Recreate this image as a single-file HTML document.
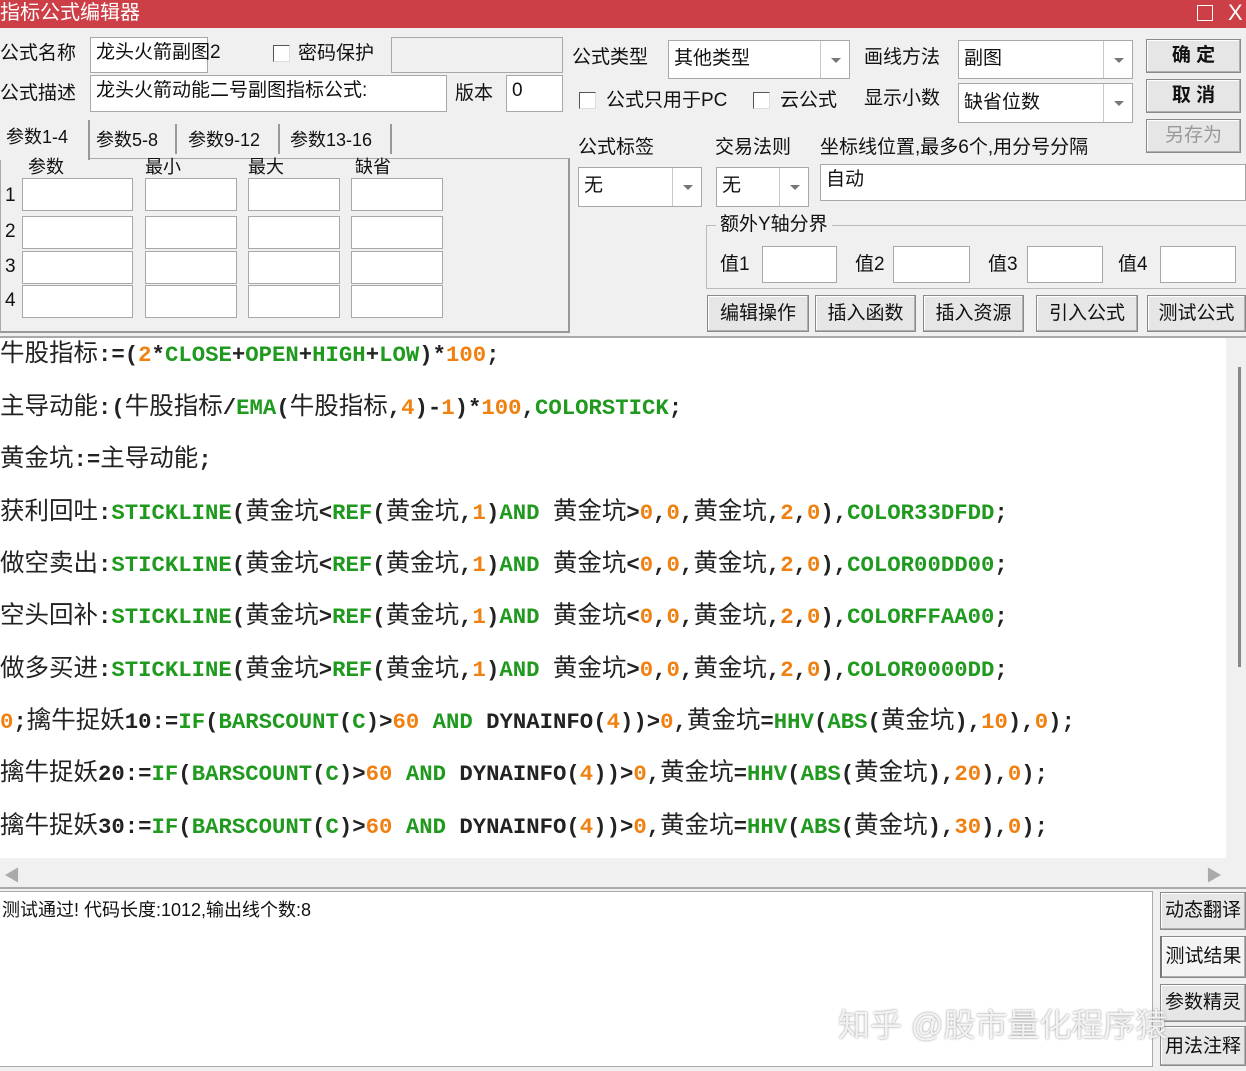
<!DOCTYPE html>
<html><head><meta charset="utf-8"><style>
body{margin:0;width:1246px;height:1071px;background:#f0f0f0;position:relative;overflow:hidden;font-family:"Liberation Sans","Noto Sans CJK SC",sans-serif;color:#111}
.a{position:absolute;white-space:nowrap}
.t{position:absolute;white-space:nowrap;font-size:19px;line-height:22px}
.box{position:absolute;background:#fff;border:1px solid #a8a8a8;box-sizing:border-box;font-size:19px;line-height:22px;padding:4px 5px;white-space:nowrap}
.btn{position:absolute;background:#e6e6e6;border:1px solid #8a8a8a;box-shadow:inset -1px -1px 0 #b0b0b0,inset 1px 1px 0 #fff;box-sizing:border-box;font-size:19px;text-align:center;white-space:nowrap}
.dd{position:absolute;right:0;top:0;bottom:0;width:28px;border-left:1px solid #c8c8c8}
.dd:after{content:"";position:absolute;left:10px;top:50%;margin-top:-2px;border:5px solid transparent;border-top:5px solid #777;border-bottom:0}
.cb{position:absolute;width:15px;height:15px;border:1px solid #555;border-right-color:#ddd;border-bottom-color:#ddd;background:#fff}
.code{position:absolute;left:0;font-family:"Liberation Mono",monospace;font-weight:bold;font-size:22.3px;line-height:32px;white-space:nowrap;color:#222}
.code .c{font-family:"Noto Sans CJK SC",sans-serif;font-weight:normal;font-size:24.5px}
.g{color:#1f9a1f}.o{color:#f08010}
</style></head><body>
<div class="a" style="left:0;top:0;width:1246px;height:28px;background:#cc3f46"></div>
<div class="t" style="left:0;top:2px;color:#fff;font-size:20px">指标公式编辑器</div>
<div class="a" style="left:1197px;top:5px;width:14px;height:14px;border:1.5px solid #fff"></div>
<div class="a" style="left:1228px;top:0;color:#fff;font-size:22px">X</div>

<div class="t" style="left:0;top:43px">公式名称</div>
<div class="box" style="left:90px;top:37px;width:118px;height:36px">龙头火箭副图2</div>
<div class="cb" style="left:273px;top:45px"></div>
<div class="t" style="left:298px;top:43px">密码保护</div>
<div class="box" style="left:391px;top:37px;width:172px;height:36px;background:#f0f0f0"></div>
<div class="t" style="left:0;top:83px">公式描述</div>
<div class="box" style="left:90px;top:75px;width:357px;height:37px">龙头火箭动能二号副图指标公式:</div>
<div class="t" style="left:455px;top:83px">版本</div>
<div class="box" style="left:506px;top:75px;width:57px;height:37px">0</div>

<div class="a" style="left:0;top:158px;width:567px;height:172px;border:1px solid #aaa;border-right:2px solid #999;border-bottom:2px solid #999;background:#f0f0f0"></div>
<div class="a" style="left:0;top:120px;width:88px;height:40px;background:#f0f0f0;border-right:2px solid #999"></div>
<div class="t" style="left:6px;top:126px;font-size:18px">参数1-4</div>
<div class="t" style="left:96px;top:129px;font-size:18px">参数5-8</div>
<div class="a" style="left:175px;top:124px;height:30px;border-left:2px solid #999"></div>
<div class="t" style="left:188px;top:129px;font-size:18px">参数9-12</div>
<div class="a" style="left:278px;top:124px;height:30px;border-left:2px solid #999"></div>
<div class="t" style="left:290px;top:129px;font-size:18px">参数13-16</div>
<div class="a" style="left:390px;top:124px;height:30px;border-left:2px solid #999"></div>
<div class="t" style="left:28px;top:156px;font-size:18px">参数</div>
<div class="t" style="left:145px;top:156px;font-size:18px">最小</div>
<div class="t" style="left:248px;top:156px;font-size:18px">最大</div>
<div class="t" style="left:355px;top:156px;font-size:18px">缺省</div>
<div class="t" style="left:5px;top:185px">1</div><div class="t" style="left:5px;top:221px">2</div><div class="t" style="left:5px;top:256px">3</div><div class="t" style="left:5px;top:290px">4</div>
<div class="box" style="left:22px;top:178px;width:111px;height:33px"></div><div class="box" style="left:145px;top:178px;width:92px;height:33px"></div><div class="box" style="left:248px;top:178px;width:92px;height:33px"></div><div class="box" style="left:351px;top:178px;width:92px;height:33px"></div>
<div class="box" style="left:22px;top:216px;width:111px;height:33px"></div><div class="box" style="left:145px;top:216px;width:92px;height:33px"></div><div class="box" style="left:248px;top:216px;width:92px;height:33px"></div><div class="box" style="left:351px;top:216px;width:92px;height:33px"></div>
<div class="box" style="left:22px;top:251px;width:111px;height:33px"></div><div class="box" style="left:145px;top:251px;width:92px;height:33px"></div><div class="box" style="left:248px;top:251px;width:92px;height:33px"></div><div class="box" style="left:351px;top:251px;width:92px;height:33px"></div>
<div class="box" style="left:22px;top:285px;width:111px;height:33px"></div><div class="box" style="left:145px;top:285px;width:92px;height:33px"></div><div class="box" style="left:248px;top:285px;width:92px;height:33px"></div><div class="box" style="left:351px;top:285px;width:92px;height:33px"></div>

<div class="t" style="left:572px;top:47px">公式类型</div>
<div class="box" style="left:668px;top:40px;width:182px;height:39px;padding-top:7px">其他类型<span class="dd"></span></div>
<div class="t" style="left:864px;top:47px">画线方法</div>
<div class="box" style="left:958px;top:40px;width:175px;height:39px;padding-top:7px">副图<span class="dd"></span></div>
<div class="cb" style="left:579px;top:92px"></div>
<div class="t" style="left:606px;top:90px">公式只用于PC</div>
<div class="cb" style="left:753px;top:92px"></div>
<div class="t" style="left:780px;top:90px">云公式</div>
<div class="t" style="left:864px;top:88px">显示小数</div>
<div class="box" style="left:958px;top:83px;width:175px;height:40px;padding-top:8px">缺省位数<span class="dd"></span></div>
<div class="btn" style="left:1146px;top:39px;width:95px;height:34px;line-height:32px;font-weight:bold">确 定</div>
<div class="btn" style="left:1146px;top:79px;width:95px;height:34px;line-height:32px;font-weight:bold">取 消</div>
<div class="btn" style="left:1146px;top:119px;width:95px;height:34px;line-height:32px;color:#999">另存为</div>
<div class="t" style="left:578px;top:137px">公式标签</div>
<div class="t" style="left:715px;top:137px">交易法则</div>
<div class="t" style="left:820px;top:137px">坐标线位置,最多6个,用分号分隔</div>
<div class="box" style="left:578px;top:167px;width:124px;height:40px;padding-top:7px">无<span class="dd"></span></div>
<div class="box" style="left:716px;top:167px;width:93px;height:40px;padding-top:7px">无<span class="dd"></span></div>
<div class="box" style="left:820px;top:164px;width:426px;height:37px">自动</div>
<div class="a" style="left:706px;top:225px;width:540px;height:62px;border:1px solid #bbb;border-right:0"></div>
<div class="t" style="left:716px;top:214px;background:#f0f0f0;padding:0 4px">额外Y轴分界</div>
<div class="t" style="left:720px;top:254px">值1</div><div class="box" style="left:762px;top:246px;width:75px;height:37px"></div>
<div class="t" style="left:855px;top:254px">值2</div><div class="box" style="left:893px;top:246px;width:77px;height:37px"></div>
<div class="t" style="left:988px;top:254px">值3</div><div class="box" style="left:1027px;top:246px;width:76px;height:37px"></div>
<div class="t" style="left:1118px;top:254px">值4</div><div class="box" style="left:1160px;top:246px;width:76px;height:37px"></div>
<div class="btn" style="left:707px;top:295px;width:102px;height:37px;line-height:35px">编辑操作</div>
<div class="btn" style="left:815px;top:295px;width:101px;height:37px;line-height:35px">插入函数</div>
<div class="btn" style="left:923px;top:295px;width:101px;height:37px;line-height:35px">插入资源</div>
<div class="btn" style="left:1036px;top:295px;width:102px;height:37px;line-height:35px">引入公式</div>
<div class="btn" style="left:1147px;top:295px;width:99px;height:37px;line-height:35px">测试公式</div>

<div class="a" style="left:0;top:336px;width:1246px;height:2px;background:#aaa"></div>
<div class="a" style="left:0;top:338px;width:1226px;height:520px;background:#fff"></div>
<div class="a" style="left:1226px;top:338px;width:20px;height:520px;background:#f0f0f0"></div>
<div class="a" style="left:1238px;top:367px;width:3px;height:300px;background:#888"></div>
<div class="a" style="left:4px;top:862px;color:#aaa;font-size:16px">◀</div>
<div class="a" style="left:1206px;top:862px;color:#aaa;font-size:16px">▶</div>

<div class="code" style="top:336px"><span class="c">牛股指标</span>:=(<span class="o">2</span>*<span class="g">CLOSE</span>+<span class="g">OPEN</span>+<span class="g">HIGH</span>+<span class="g">LOW</span>)*<span class="o">100</span>;</div>
<div class="code" style="top:389px"><span class="c">主导动能</span>:(<span class="c">牛股指标</span>/<span class="g">EMA</span>(<span class="c">牛股指标</span>,<span class="o">4</span>)-<span class="o">1</span>)*<span class="o">100</span>,<span class="g">COLORSTICK</span>;</div>
<div class="code" style="top:441px"><span class="c">黄金坑</span>:=<span class="c">主导动能</span>;</div>
<div class="code" style="top:494px"><span class="c">获利回吐</span>:<span class="g">STICKLINE</span>(<span class="c">黄金坑</span>&lt;<span class="g">REF</span>(<span class="c">黄金坑</span>,<span class="o">1</span>)<span class="g">AND</span> <span class="c">黄金坑</span>&gt;<span class="o">0</span>,<span class="o">0</span>,<span class="c">黄金坑</span>,<span class="o">2</span>,<span class="o">0</span>),<span class="g">COLOR33DFDD</span>;</div>
<div class="code" style="top:546px"><span class="c">做空卖出</span>:<span class="g">STICKLINE</span>(<span class="c">黄金坑</span>&lt;<span class="g">REF</span>(<span class="c">黄金坑</span>,<span class="o">1</span>)<span class="g">AND</span> <span class="c">黄金坑</span>&lt;<span class="o">0</span>,<span class="o">0</span>,<span class="c">黄金坑</span>,<span class="o">2</span>,<span class="o">0</span>),<span class="g">COLOR00DD00</span>;</div>
<div class="code" style="top:598px"><span class="c">空头回补</span>:<span class="g">STICKLINE</span>(<span class="c">黄金坑</span>&gt;<span class="g">REF</span>(<span class="c">黄金坑</span>,<span class="o">1</span>)<span class="g">AND</span> <span class="c">黄金坑</span>&lt;<span class="o">0</span>,<span class="o">0</span>,<span class="c">黄金坑</span>,<span class="o">2</span>,<span class="o">0</span>),<span class="g">COLORFFAA00</span>;</div>
<div class="code" style="top:651px"><span class="c">做多买进</span>:<span class="g">STICKLINE</span>(<span class="c">黄金坑</span>&gt;<span class="g">REF</span>(<span class="c">黄金坑</span>,<span class="o">1</span>)<span class="g">AND</span> <span class="c">黄金坑</span>&gt;<span class="o">0</span>,<span class="o">0</span>,<span class="c">黄金坑</span>,<span class="o">2</span>,<span class="o">0</span>),<span class="g">COLOR0000DD</span>;</div>
<div class="code" style="top:703px"><span class="o">0</span>;<span class="c">擒牛捉妖</span>10:=<span class="g">IF</span>(<span class="g">BARSCOUNT</span>(<span class="g">C</span>)&gt;<span class="o">60</span> <span class="g">AND</span> DYNAINFO(<span class="o">4</span>))&gt;<span class="o">0</span>,<span class="c">黄金坑</span>=<span class="g">HHV</span>(<span class="g">ABS</span>(<span class="c">黄金坑</span>),<span class="o">10</span>),<span class="o">0</span>);</div>
<div class="code" style="top:755px"><span class="c">擒牛捉妖</span>20:=<span class="g">IF</span>(<span class="g">BARSCOUNT</span>(<span class="g">C</span>)&gt;<span class="o">60</span> <span class="g">AND</span> DYNAINFO(<span class="o">4</span>))&gt;<span class="o">0</span>,<span class="c">黄金坑</span>=<span class="g">HHV</span>(<span class="g">ABS</span>(<span class="c">黄金坑</span>),<span class="o">20</span>),<span class="o">0</span>);</div>
<div class="code" style="top:808px"><span class="c">擒牛捉妖</span>30:=<span class="g">IF</span>(<span class="g">BARSCOUNT</span>(<span class="g">C</span>)&gt;<span class="o">60</span> <span class="g">AND</span> DYNAINFO(<span class="o">4</span>))&gt;<span class="o">0</span>,<span class="c">黄金坑</span>=<span class="g">HHV</span>(<span class="g">ABS</span>(<span class="c">黄金坑</span>),<span class="o">30</span>),<span class="o">0</span>);</div>

<div class="a" style="left:0;top:887px;width:1246px;height:2px;background:#aaa"></div>
<div class="a" style="left:0;top:891px;width:1152px;height:174px;background:#fff;border:1px solid #aaa;border-left:0"></div>
<div class="t" style="left:2px;top:899px;font-size:18px">测试通过! 代码长度:1012,输出线个数:8</div>
<div class="btn" style="left:1160px;top:892px;width:86px;height:38px;line-height:36px">动态翻译</div>
<div class="btn" style="left:1160px;top:936px;width:86px;height:42px;line-height:40px;background:#f4f4f4;border-left:2px solid #777">测试结果</div>
<div class="btn" style="left:1160px;top:984px;width:86px;height:38px;line-height:36px">参数精灵</div>
<div class="btn" style="left:1160px;top:1026px;width:86px;height:40px;line-height:40px">用法注释</div>
<div class="a" style="left:838px;top:1000px;font-size:32px;color:rgba(255,255,255,0.85);text-shadow:0 0 2px #888">知乎 @股市量化程序猿</div>
</body></html>
